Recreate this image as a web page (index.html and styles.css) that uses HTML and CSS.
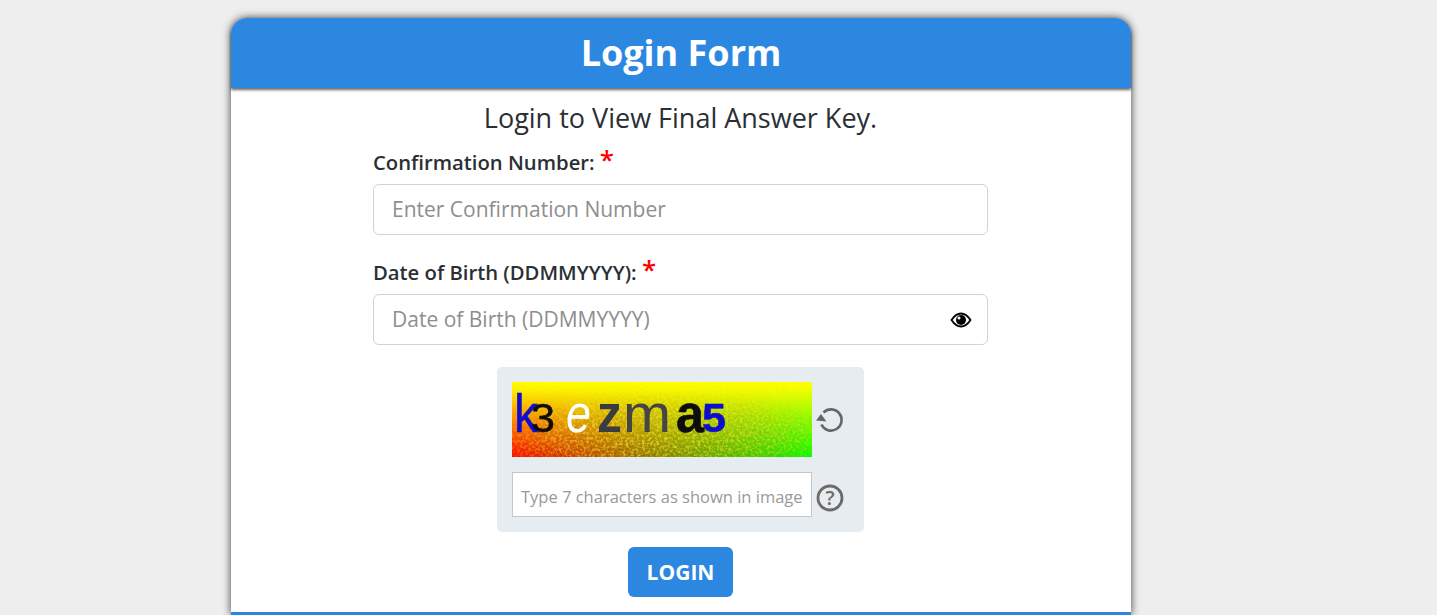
FILE: index.html
```html
<!DOCTYPE html>
<html lang="en">
<head>
<meta charset="utf-8">
<title>Login Form</title>
<link rel="stylesheet" href="styles.css">
</head>
<body>
<main class="card">
  <header class="card-head"><h1>Login Form</h1></header>
  <form class="card-body">
    <p class="intro">Login to View Final Answer Key.</p>
    <div class="field">
      <label class="label">Confirmation Number: <span class="req">*</span></label>
      <div class="input-wrap"><input class="input" type="text" placeholder="Enter Confirmation Number"></div>
    </div>
    <div class="field">
      <label class="label">Date of Birth (DDMMYYYY): <span class="req">*</span></label>
      <div class="input-wrap">
        <input class="input" type="text" placeholder="Date of Birth (DDMMYYYY)">
        <svg class="eye" viewBox="0 0 22 16" width="22" height="16" aria-hidden="true">
          <path d="M1.500 8C4.500 3.400 7.500 1.500 11 1.500S17.500 3.400 20.500 8c-3 4.600-6 6.500-9.500 6.500S4.500 12.600 1.500 8Z" fill="#fff" stroke="#000" stroke-width="1.800"/>
          <circle cx="11" cy="8" r="5" fill="#000"/>
          <circle cx="9" cy="6" r="1.500" fill="#fff"/>
        </svg>
      </div>
    </div>
    <section class="captcha">
      <div class="captcha-row">
        <svg class="captcha-img" viewBox="0 0 300 75" width="300" height="75" role="img">
          <defs>
            <linearGradient id="h"><stop offset="0" stop-color="#ff0000"/><stop offset="1" stop-color="#00ff00"/></linearGradient>
            <linearGradient id="v" x2="0" y2="1"><stop offset="0" stop-color="#ffff00"/><stop offset=".1" stop-color="#ffff00" stop-opacity=".95"/><stop offset="1" stop-color="#ffff00" stop-opacity="0"/></linearGradient>
            <radialGradient id="f" cx=".5" cy=".75" r=".62"><stop offset="0" stop-color="#fff"/><stop offset=".55" stop-color="#fff" stop-opacity=".75"/><stop offset="1" stop-color="#fff" stop-opacity=".08"/></radialGradient>
            <mask id="fade"><rect width="300" height="75" fill="url(#f)"/></mask>
            <filter id="noise" x="0" y="0" width="100%" height="100%">
              <feTurbulence type="fractalNoise" baseFrequency=".36" numOctaves="2" seed="7"/>
              <feColorMatrix values="0 0 0 0 .98  0 0 0 0 .78  0 0 0 0 .05  4 0 0 0 -1.700"/>
              <feGaussianBlur stdDeviation=".45"/>
            </filter>
            <filter id="noise2" x="0" y="0" width="100%" height="100%">
              <feTurbulence type="fractalNoise" baseFrequency=".42" numOctaves="2" seed="23"/>
              <feColorMatrix values="0 0 0 0 .4  0 0 0 0 .3  0 0 0 0 0  4 0 0 0 -1.800"/>
              <feGaussianBlur stdDeviation=".45"/>
            </filter>
            <filter id="soft"><feGaussianBlur stdDeviation=".5"/></filter>
          </defs>
          <rect width="300" height="75" fill="url(#h)"/>
          <rect width="300" height="75" fill="url(#v)"/>
          <rect width="300" height="75" filter="url(#noise)" mask="url(#fade)" opacity=".7"/>
          <rect width="300" height="75" filter="url(#noise2)" mask="url(#fade)" opacity=".5"/>
          <g filter="url(#soft)">
            <text class="cap" y="50"><tspan class="heavy-blue big" x="2" textLength="24" lengthAdjust="spacingAndGlyphs">k</tspan><tspan class="heavy-black small" x="19" textLength="24" lengthAdjust="spacingAndGlyphs">3</tspan></text>
            <text class="cap ital white big" x="54" y="50" textLength="25" lengthAdjust="spacingAndGlyphs">e</text>
            <text class="cap bold slate big" x="85" y="50" textLength="25" lengthAdjust="spacingAndGlyphs">z</text>
            <text class="cap grey big" x="111" y="50" textLength="48" lengthAdjust="spacingAndGlyphs">m</text>
            <text class="cap bold" y="50"><tspan class="heavy-black big" x="164" textLength="28" lengthAdjust="spacingAndGlyphs">a</tspan><tspan class="heavy-blue small" x="190" textLength="24" lengthAdjust="spacingAndGlyphs">5</tspan></text>
          </g>
        </svg>
        <svg class="side-icon" viewBox="0 0 28 28" width="28" height="28" aria-hidden="true">
          <path d="M7.500 6.500A10.600 10.600 0 1 1 5.400 18.500" fill="none" stroke="#666" stroke-width="2.600"/>
          <path d="M0 14.500 5 8l5.500 7.500Z" fill="#666"/>
        </svg>
      </div>
      <div class="captcha-row">
        <input class="captcha-input" type="text" placeholder="Type 7 characters as shown in image">
        <svg class="side-icon help" viewBox="0 0 28 28" width="28" height="28" aria-hidden="true">
          <circle cx="14" cy="14" r="12" fill="none" stroke="#6b6b6b" stroke-width="2.800"/>
          <text class="qmark" x="14" y="21" text-anchor="middle">?</text>
        </svg>
      </div>
    </section>
    <button class="btn" type="button">LOGIN</button>
  </form>
</main>
</body>
</html>
```
FILE: styles.css
```css
* { box-sizing: border-box; }
html, body { height: 100%; overflow: hidden; }
body {
  margin: 0;
  background: #eeeeee;
  font-family: "Open Sans", sans-serif;
  color: #212529;
}
.card {
  width: 900px;
  margin: 18px 0 0 231px;
  background: #fff;
  border-radius: 16px 16px 0 0;
  box-shadow: 0 0 9px 0 rgba(0, 0, 0, .75);
  border-bottom: 3px solid #2b87e0;
}
.card-head {
  height: 70px;
  background: #2b87e0;
  border-radius: 16px 16px 0 0;
  box-shadow: 0 2px 3px rgba(0, 0, 0, .6);
  display: flex;
  align-items: center;
  justify-content: center;
}
.card-head h1 {
  margin: 0;
  color: #fff;
  font-size: 36px;
  font-weight: 700;
  line-height: 1.2;
}
.card-body {
  display: flex;
  flex-direction: column;
  align-items: center;
  padding: 0 1px 15px 0;
}
.intro {
  margin: 12px 0 0;
  font-size: 27px;
  line-height: 36px;
  text-align: center;
  color: #2b2f33;
}
.field { width: 615px; margin-top: 12px; margin-bottom: 23px; }
.field + .field { margin-top: 0; margin-bottom: 22px; }
.label {
  display: block;
  font-size: 20.25px;
  font-weight: 600;
  line-height: 28px;
  margin-bottom: 8px;
  color: #2b2f33;
}
.req { color: #ff0000; font-size: 26px; line-height: 20px; vertical-align: 1px; }
.input-wrap { position: relative; }
.input {
  display: block;
  width: 100%;
  height: 51px;
  padding: 0 18px 2px;
  border: 1px solid #ced4da;
  border-radius: 6px;
  font: 400 21px "Open Sans", sans-serif;
  color: #495057;
  background: #fff;
}
.input::placeholder { color: #8e8e8e; opacity: 1; }
.eye { position: absolute; right: 16px; top: 18px; }
.captcha {
  width: 367px;
  height: 165px;
  padding: 15px;
  background: #e6ecf0;
  border-radius: 5px;
  display: flex;
  flex-direction: column;
  gap: 15px;
}
.captcha-row { display: flex; align-items: center; gap: 4px; }
.captcha-img { display: block; flex: none; }
.cap { font-family: "Liberation Sans", sans-serif; }
.big { font-size: 54px; }
.small { font-size: 40px; }
.bold { font-weight: 700; }
.ital { font-style: italic; }
.white { fill: #fff; }
.slate { fill: #3a3a42; }
.grey { fill: #444; }
.heavy-blue { fill: #0a0ad0; stroke: #0a0ad0; stroke-width: .5; }
.heavy-black { fill: #0a0a0a; stroke: #0a0a0a; stroke-width: .5; }
.captcha-input {
  width: 300px;
  height: 45px;
  flex: none;
  padding: 4px 8px 0;
  border: 1px solid #c0c8cc;
  background: #fff;
  font: 400 16.500px "Open Sans", sans-serif;
}
.captcha-input::placeholder { color: #9a9a9a; opacity: 1; }
.side-icon { display: block; flex: none; }
.help { margin-top: 6px; }
.qmark { font: 600 20px "Open Sans", sans-serif; fill: #6b6b6b; }
.btn {
  width: 105px;
  height: 50px;
  margin-top: 15px;
  border: 0;
  border-radius: 6px;
  background: #2b87e0;
  color: #fff;
  font: 700 21px "Open Sans", sans-serif;
}
```
